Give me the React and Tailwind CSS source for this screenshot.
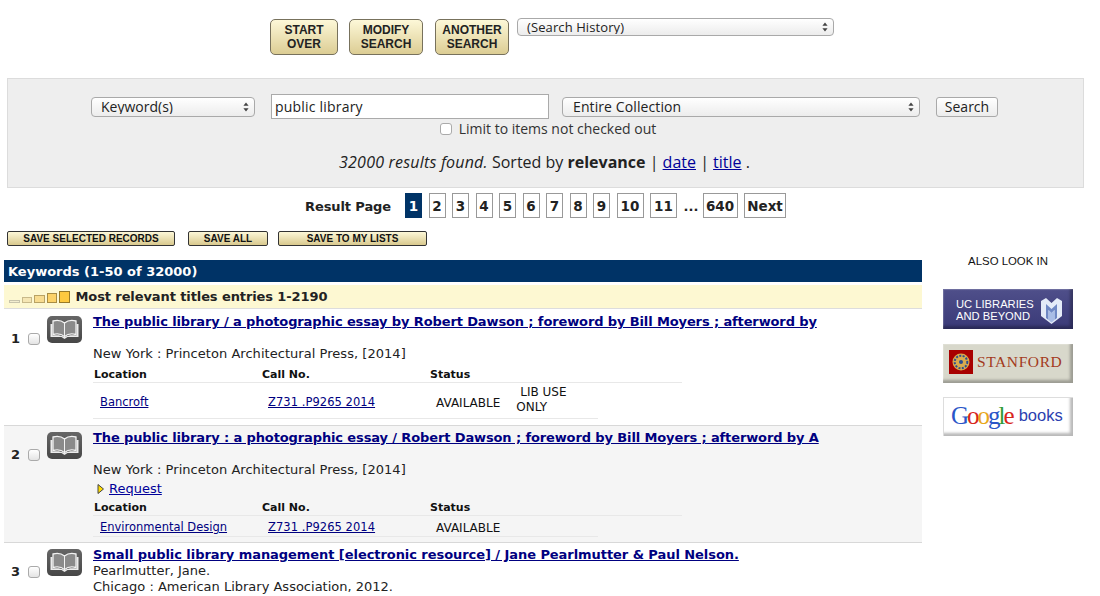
import { useState } from 'react';

const verdana = 'font-["DejaVu_Sans",Verdana,sans-serif]';
const pages = ['2', '3', '4', '5', '6', '7', '8', '9'];

function TopButton({ lines, width }) {
  return (
    <button className={`${width} block h-[36px] rounded-[5px] border border-[#77715c] bg-gradient-to-b from-[#fdf8d8] to-[#dccd94] font-["Liberation_Sans",Arial,sans-serif] text-[12px] font-bold leading-[14px] text-[#222]`}>
      {lines[0]}<br />{lines[1]}
    </button>
  );
}

function SaveButton({ label, width }) {
  return (
    <button className={`${width} block h-[15px] rounded-[2px] border border-[#333] bg-gradient-to-b from-[#fdf8d8] to-[#d9c98e] font-["Liberation_Sans",Arial,sans-serif] text-[10px] font-bold leading-[13px] text-[#111]`}>
      {label}
    </button>
  );
}

function FakeSelect({ label, width, height = 'h-[20px]', textClass = 'pl-[9px] text-[14px]' }) {
  return (
    <div className={`${width} ${height} relative`}>
      <select className={`block h-full w-full appearance-none rounded-[4px] border border-[#a9a9a9] bg-gradient-to-b from-white to-[#ececec] font-["Open_Sans",sans-serif] leading-none text-[#222] ${textClass}`}>
        <option>{label}</option>
      </select>
      <svg className="pointer-events-none absolute right-[6px] top-1/2 -translate-y-1/2" width="6" height="10" viewBox="0 0 6 10">
        <path d="M3 0.5 L5.6 3.8 H0.4 Z M3 9.5 L5.6 6.2 H0.4 Z" fill="#444" />
      </svg>
    </div>
  );
}

function PageBox({ label, width = 'w-[17px]', current = false }) {
  return (
    <span className={`${width} flex h-[25px] items-center justify-center border pt-[2px] text-[13.5px] font-bold ${current ? 'border-[#003366] bg-[#003366] text-white' : 'border-[#999] bg-white text-[#222]'}`}>
      {label}
    </span>
  );
}

function BookIcon() {
  return (
    <svg className="block" width="35" height="27" viewBox="0 0 35 27">
      <defs>
        <linearGradient id="bookBg" x1="0" y1="0" x2="0" y2="1">
          <stop offset="0" stopColor="#666666" />
          <stop offset="1" stopColor="#474747" />
        </linearGradient>
      </defs>
      <rect width="35" height="27" rx="5" fill="url(#bookBg)" />
      <path d="M6 5 C10 4 14.5 4.5 17.5 7 C20.5 4.5 25 4 29 5 V18.5 C25 17.5 20.5 18 17.5 20.5 C14.5 18 10 17.5 6 18.5 Z" fill="#8a8a8a" stroke="#f2f2f2" strokeWidth="1.3" />
      <path d="M17.5 7 V20.5" stroke="#f2f2f2" strokeWidth="1" />
      <path d="M3.5 8 V21 H14.5 L17.5 23 L20.5 21 H31.5 V8 H29.5 V19.5 C25 18.8 20.5 19.3 17.5 21 C14.5 19.3 10 18.8 5.5 19.5 V8 Z" fill="#ececec" />
    </svg>
  );
}

function RowLead({ num }) {
  return (
    <div className="flex w-[89px] shrink-0 items-start">
      <span className="mt-[21px] w-[24px] shrink-0 pl-[7px] text-[13px] font-bold leading-[16px] text-[#222]">{num}</span>
      <input type="checkbox" className="mt-[23px] h-[12px] w-[12px] shrink-0 appearance-none rounded-[3px] border border-[#aaa] bg-gradient-to-b from-white to-[#e4e4e4]" />
      <div className="ml-[7px] mt-[6px]"><BookIcon /></div>
    </div>
  );
}

function Title({ tracking = 'tracking-[-0.12px]', children }) {
  return <a href="#" className={`${tracking} block whitespace-nowrap text-[13px] font-bold leading-[16px] text-[#000080] underline`}>{children}</a>;
}

function Holdings({ location, rowClass, headClass = '', status, lib }) {
  return (
    <div className="text-[#111]">
      <div className={`${headClass} flex h-[15px] w-[589px] items-center gap-[2px] border-b border-[#e8e8e8] text-[11px] font-bold`}>
        <span className="w-[166px] pl-[1px]">Location</span>
        <span className="w-[167px] pl-[1px]">Call No.</span>
        <span>Status</span>
      </div>
      <div className={`${rowClass} flex w-[505px] items-center gap-[2px] border-b border-[#e8e8e8] text-[11.5px]`}>
        <a href="#" className="w-[166px] pl-[7px] text-[#000080] underline">{location}</a>
        <a href="#" className="w-[167px] pl-[7px] tracking-[0.05px] text-[#000080] underline">Z731 .P9265 2014</a>
        <span className="pl-[6px] text-[12px]">{status}</span>
        {lib && <span className="mb-[5px] ml-[14px] w-[64px] text-[12px] leading-[15px]"><span className="pl-[4px]">LIB USE</span><br />ONLY</span>}
      </div>
    </div>
  );
}

function LogoBox({ className, height = 'h-[39px]', children }) {
  return (
    <div className={`flex ${height} w-[130px] items-center shadow-[inset_-3px_-3px_3px_rgba(0,0,0,0.28),inset_1px_1px_1px_rgba(255,255,255,0.2)] ${className}`}>
      {children}
    </div>
  );
}

function ColoredLetter({ c, children }) {
  return <span className={c}>{children}</span>;
}

export default function App() {
  const [term, setTerm] = useState('public library');

  return (
    <div className={`h-[596px] w-[1100px] overflow-hidden bg-white ${verdana} text-[13px] text-[#222]`}>
      {/* top buttons */}
      <div className="flex h-[78px] items-start pl-[270px] pt-[18px]">
        <div className="mt-[1px]"><TopButton lines={['START', 'OVER']} width="w-[68px]" /></div>
        <div className="ml-[11px] mt-[1px]"><TopButton lines={['MODIFY', 'SEARCH']} width="w-[74px]" /></div>
        <div className="ml-[12px] mt-[1px]"><TopButton lines={['ANOTHER', 'SEARCH']} width="w-[74px]" /></div>
        <div className="ml-[8px]"><FakeSelect label="(Search History)" width="w-[317px]" height="h-[18px]" textClass="pl-[9px] text-[13px] tracking-[0.1px]" /></div>
      </div>

      {/* search panel */}
      <div className="ml-[7px] h-[110px] w-[1077px] border border-[#dcdcdc] bg-[#eeeeee] font-['Open_Sans',sans-serif]">
        <div className="flex items-center pl-[83px] pt-[15px]">
          <FakeSelect label="Keyword(s)" width="w-[164px]" />
          <input
            value={term}
            onChange={(e) => setTerm(e.target.value)}
            className="ml-[16px] h-[25px] w-[278px] border border-[#aaa] bg-white pl-[3px] text-[14px] tracking-[0.2px] text-[#222] outline-none"
          />
          <div className="ml-[13px]"><FakeSelect label="Entire Collection" width="w-[358px]" textClass="pl-[10px] text-[14px] tracking-[0.1px]" /></div>
          <button className="ml-[16px] h-[20px] w-[62px] rounded-[3px] border border-[#a9a9a9] bg-gradient-to-b from-white to-[#ececec] text-[14px] leading-none text-[#222]">Search</button>
        </div>
        <div className="mt-[1px] flex items-center justify-center pl-[5px] text-[14px] leading-[18px] text-[#333]">
          <input type="checkbox" className="mr-[7px] h-[12px] w-[12px] appearance-none rounded-[3px] border border-[#aaa] bg-white" />
          <span>Limit to items not checked out</span>
        </div>
        <p className="mt-[14px] pr-[2px] text-center text-[16px] leading-[20px] text-[#222]">
          <i className="tracking-[0.2px]">32000 results found.</i> Sorted by <b>relevance</b> | <a href="#" className="text-[#000099] underline">date</a> | <a href="#" className="text-[#000099] underline">title</a> .
        </p>
      </div>

      {/* pagination */}
      <div className="mt-[5px] flex h-[25px] items-center pl-[305px]">
        <span className="mr-[15px] w-[85px] whitespace-nowrap pt-[2px] text-[13px] font-bold tracking-[-0.1px]">Result Page</span>
        <div className="flex items-center gap-[6.5px]">
          <PageBox label="1" current />
          {pages.map((p) => <PageBox key={p} label={p} />)}
          <PageBox label="10" width="w-[27px]" />
          <PageBox label="11" width="w-[27px]" />
          <span className="w-[12.5px] pt-[2px] text-center text-[13px] font-bold">...</span>
          <PageBox label="640" width="w-[35px]" />
          <PageBox label="Next" width="w-[42px]" />
        </div>
      </div>

      {/* save buttons */}
      <div className="mt-[13px] flex items-start pl-[7px]">
        <SaveButton label="SAVE SELECTED RECORDS" width="w-[168px]" />
        <div className="ml-[13px]"><SaveButton label="SAVE ALL" width="w-[80px]" /></div>
        <div className="ml-[10px]"><SaveButton label="SAVE TO MY LISTS" width="w-[149px]" /></div>
      </div>

      <div className="mt-[14px] flex items-start">
        {/* results */}
        <div className="ml-[4px] w-[918px] shrink-0">
          <div className="flex h-[22px] items-center bg-[#003366] pl-[4px] pt-[1px] text-[13px] font-bold text-white">Keywords (1-50 of 32000)</div>
          <div className="mt-[3px] flex h-[24px] items-center border-b border-[#ddd] bg-[#fdf8d2] pl-[5px]">
            <div className="flex items-end gap-[2px]">
              <span className="h-[3px] w-[10.5px] border border-[#c8c4ac] bg-[#f3eed0]" />
              <span className="h-[6px] w-[10.5px] border border-[#c8b98a] bg-[#f5e6b4]" />
              <span className="h-[8px] w-[10.5px] border border-[#b8a264] bg-[#f8dc90]" />
              <span className="h-[10px] w-[10.5px] border border-[#a88c44] bg-[#fcd268]" />
              <span className="h-[12px] w-[10.5px] border border-[#987a28] bg-[#fdc940]" />
            </div>
            <span className="ml-[6px] text-[13px] font-bold tracking-[-0.1px] text-[#222]">Most relevant titles entries 1-2190</span>
          </div>

          <div className="mt-[1px] flex h-[116px] border-b border-[#d8d8d8]">
            <RowLead num="1" />
            <div className="pt-[4px]">
              <Title>The public library / a photographic essay by Robert Dawson ; foreword by Bill Moyers ; afterword by</Title>
              <p className="mt-[16px] leading-[16px] tracking-[0.04px]">New York : Princeton Architectural Press, [2014]</p>
              <div className="mt-[6px]"><Holdings location="Bancroft" headClass="pt-[1px]" rowClass="h-[36px] pt-[4px]" status="AVAILABLE" lib /></div>
            </div>
          </div>

          <div className="flex h-[117px] border-b border-[#d8d8d8] bg-[#f5f5f5]">
            <RowLead num="2" />
            <div className="pt-[4px]">
              <Title>The public library : a photographic essay / Robert Dawson ; foreword by Bill Moyers ; afterword by A</Title>
              <p className="mt-[16px] leading-[16px] tracking-[0.04px]">New York : Princeton Architectural Press, [2014]</p>
              <div className="mt-[1px] flex h-[19px] items-center pl-[4px]">
                <svg width="7" height="10" viewBox="0 0 7 10"><path d="M1 0.5 L6.5 5 L1 9.5 Z" fill="#ffdd00" stroke="#444" strokeWidth="1" /></svg>
                <a href="#" className="ml-[5px] text-[13px] text-[#000099] underline">Request</a>
              </div>
              <div className="mt-[3px]"><Holdings location="Environmental Design" rowClass="h-[21px] pt-[3px]" status="AVAILABLE" /></div>
            </div>
          </div>

          <div className="flex h-[60px]">
            <RowLead num="3" />
            <div className="pt-[4px] leading-[16px]">
              <Title tracking="tracking-[-0.06px]">Small public library management [electronic resource] / Jane Pearlmutter &amp; Paul Nelson.</Title>
              <p>Pearlmutter, Jane.</p>
              <p>Chicago : American Library Association, 2012.</p>
            </div>
          </div>
        </div>

        {/* also look in */}
        <aside className="ml-[21px] w-[130px] font-['Liberation_Sans',Arial,sans-serif]">
          <p className="mt-[-5px] text-center text-[11.4px] leading-[13px] text-[#111]">ALSO LOOK IN</p>
          <div className="mt-[21px] flex flex-col">
            <LogoBox height="h-[40px]" className="bg-gradient-to-b from-[#4f4f8a] to-[#3a3a78] text-white">
              <span className="ml-[13px] pt-[2px] text-[11.2px] font-normal leading-[12px]">UC LIBRARIES<br />AND BEYOND</span>
              <svg className="ml-[7px] mt-[3px]" width="21" height="26" viewBox="0 0 21 26">
                <path d="M0 3 L5 0 L10.5 5 L16 0 L21 3 V18 L10.5 26 L0 18 Z" fill="#e4ebf8" />
                <path d="M5 6 L10.5 11 L16 6 V20 L13.5 22 V12 L10.5 15 L7.5 12 V22 L5 20 Z" fill="#6f88c4" />
                <path d="M7.5 12 L10.5 15 L13.5 12 V22 L10.5 24.5 L7.5 22 Z" fill="#a9bde6" />
              </svg>
            </LogoBox>
            <LogoBox className="mt-[15px] bg-[#d8d8cb] pb-[4px]">
              <div className="ml-[6px] flex h-[24px] w-[24px] items-center justify-center bg-[#a80000]">
                <svg width="18" height="18" viewBox="0 0 18 18">
                  <circle cx="9" cy="9" r="8.5" fill="#d9ab4e" />
                  <circle cx="9" cy="9" r="6.3" fill="none" stroke="#2c4f8f" strokeWidth="2" strokeDasharray="2 1.4" />
                  <circle cx="9" cy="9" r="3.4" fill="#d9ab4e" />
                  <circle cx="9" cy="9" r="2" fill="#2c4f8f" />
                </svg>
              </div>
              <span className="ml-[4px] font-['Liberation_Serif',serif] text-[15.5px] tracking-[0.6px] text-[#a33a1c]">STANFORD</span>
            </LogoBox>
            <LogoBox className="mt-[14px] border-l border-t border-l-[#ddd] border-t-[#ddd] bg-white pb-[4px]">
              <span className="ml-[7px] font-['Liberation_Serif',serif] text-[25px] leading-none tracking-[-2px]">
                <ColoredLetter c="text-[#2a55c8]">G</ColoredLetter>
                <ColoredLetter c="text-[#d8261c]">o</ColoredLetter>
                <ColoredLetter c="text-[#e8a81c]">o</ColoredLetter>
                <ColoredLetter c="text-[#2a55c8]">g</ColoredLetter>
                <ColoredLetter c="text-[#2d9a34]">l</ColoredLetter>
                <ColoredLetter c="text-[#d8261c]">e</ColoredLetter>
              </span>
              <span className="ml-[6px] font-['Liberation_Sans',Arial,sans-serif] text-[16.5px] leading-none text-[#2c3fb0]">books</span>
            </LogoBox>
          </div>
        </aside>
      </div>
    </div>
  );
}
